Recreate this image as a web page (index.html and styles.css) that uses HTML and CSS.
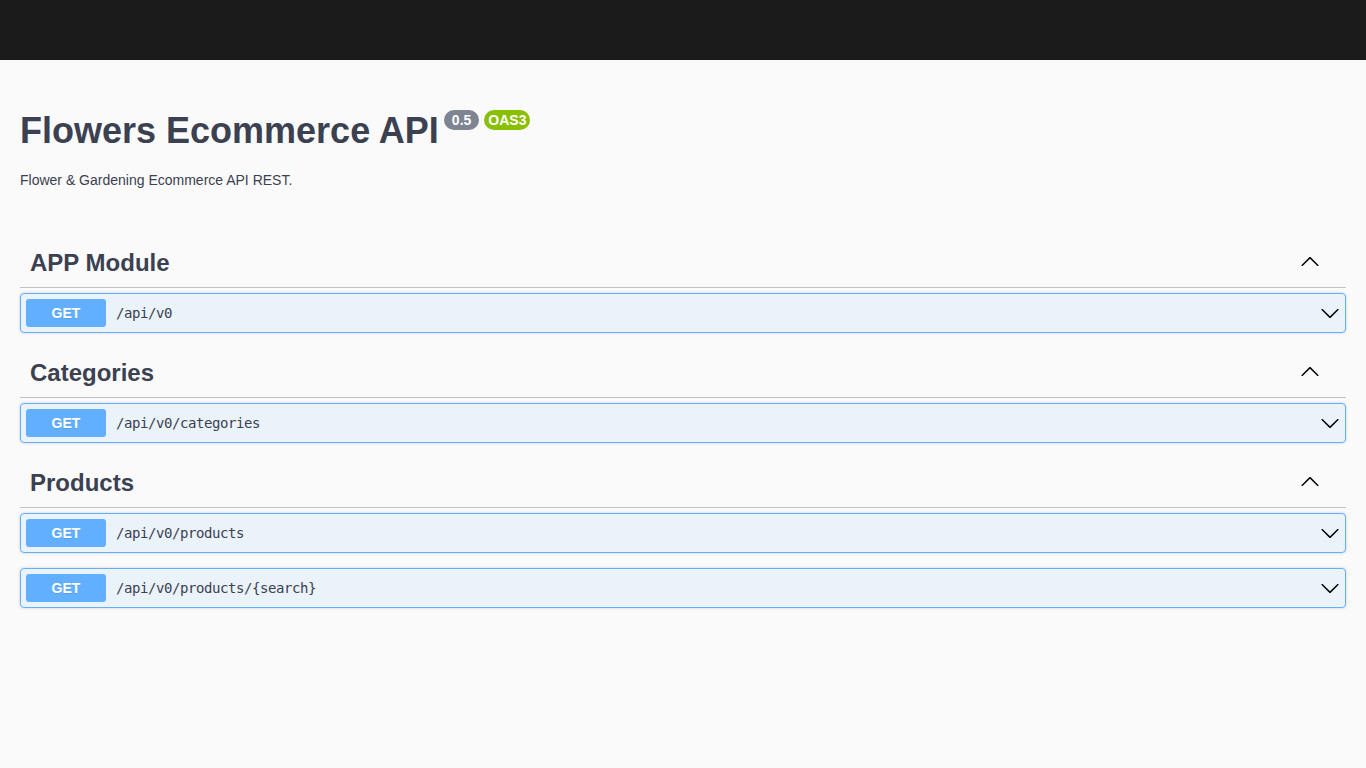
FILE: index.html
```html
<!DOCTYPE html>
<html>
<head>
<meta charset="utf-8">
<title>Flowers Ecommerce API</title>
<link rel="stylesheet" href="styles.css">
</head>
<body>
<div class="topbar"></div>
<div class="wrapper">
  <div class="info">
    <div class="title-row">
      <h2 class="title">Flowers Ecommerce API</h2>
      <span class="badge badge-version">0.5</span>
      <span class="badge badge-oas">OAS3</span>
    </div>
    <p class="description">Flower &amp; Gardening Ecommerce API REST.</p>
  </div>

  <section class="tag-section">
    <h3 class="tag">
      <span class="tag-name">APP Module</span>
      <svg class="arrow-up" width="20" height="20" viewBox="0 0 20 20"><path d="M17.418 14.908c.272.268.709.268.979 0s.271-.701 0-.969l-7.908-7.83c-.27-.268-.707-.268-.979 0l-7.908 7.83c-.27.268-.27.701 0 .969.271.268.709.268.979 0L10 7.767l7.418 7.141z"/></svg>
    </h3>
    <div class="opblock">
      <span class="method">GET</span>
      <span class="path">/api/v0</span>
      <svg class="arrow-down" width="20" height="20" viewBox="0 0 20 20"><path d="M17.418 6.109c.272-.268.709-.268.979 0s.271.701 0 .969l-7.908 7.83c-.27.268-.707.268-.979 0l-7.908-7.83c-.27-.268-.27-.701 0-.969.271-.268.709-.268.979 0L10 13.25l7.418-7.141z"/></svg>
    </div>
  </section>

  <section class="tag-section">
    <h3 class="tag">
      <span class="tag-name">Categories</span>
      <svg class="arrow-up" width="20" height="20" viewBox="0 0 20 20"><path d="M17.418 14.908c.272.268.709.268.979 0s.271-.701 0-.969l-7.908-7.83c-.27-.268-.707-.268-.979 0l-7.908 7.83c-.27.268-.27.701 0 .969.271.268.709.268.979 0L10 7.767l7.418 7.141z"/></svg>
    </h3>
    <div class="opblock">
      <span class="method">GET</span>
      <span class="path">/api/v0/categories</span>
      <svg class="arrow-down" width="20" height="20" viewBox="0 0 20 20"><path d="M17.418 6.109c.272-.268.709-.268.979 0s.271.701 0 .969l-7.908 7.83c-.27.268-.707.268-.979 0l-7.908-7.83c-.27-.268-.27-.701 0-.969.271-.268.709-.268.979 0L10 13.25l7.418-7.141z"/></svg>
    </div>
  </section>

  <section class="tag-section">
    <h3 class="tag">
      <span class="tag-name">Products</span>
      <svg class="arrow-up" width="20" height="20" viewBox="0 0 20 20"><path d="M17.418 14.908c.272.268.709.268.979 0s.271-.701 0-.969l-7.908-7.83c-.27-.268-.707-.268-.979 0l-7.908 7.83c-.27.268-.27.701 0 .969.271.268.709.268.979 0L10 7.767l7.418 7.141z"/></svg>
    </h3>
    <div class="opblock">
      <span class="method">GET</span>
      <span class="path">/api/v0/products</span>
      <svg class="arrow-down" width="20" height="20" viewBox="0 0 20 20"><path d="M17.418 6.109c.272-.268.709-.268.979 0s.271.701 0 .969l-7.908 7.83c-.27.268-.707.268-.979 0l-7.908-7.83c-.27-.268-.27-.701 0-.969.271-.268.709-.268.979 0L10 13.25l7.418-7.141z"/></svg>
    </div>
    <div class="opblock">
      <span class="method">GET</span>
      <span class="path">/api/v0/products/{search}</span>
      <svg class="arrow-down" width="20" height="20" viewBox="0 0 20 20"><path d="M17.418 6.109c.272-.268.709-.268.979 0s.271.701 0 .969l-7.908 7.83c-.27.268-.707.268-.979 0l-7.908-7.83c-.27-.268-.27-.701 0-.969.271-.268.709-.268.979 0L10 13.25l7.418-7.141z"/></svg>
    </div>
  </section>
</div>
</body>
</html>
```

FILE: styles.css
```css
html, body {
  margin: 0;
  padding: 0;
  background: #fafafa;
  font-family: "Liberation Sans", Arial, sans-serif;
  color: #3b4151;
}

.topbar {
  height: 60px;
  background: #1b1b1b;
}

.wrapper {
  padding: 0 20px;
}

.info {
  padding-top: 50px;
  margin-bottom: 47px;
}

.title-row {
  display: flex;
  align-items: flex-start;
  gap: 5px;
  margin-bottom: 19px;
}

.title {
  margin: 0;
  font-size: 36px;
  font-weight: 700;
  line-height: 41px;
  color: #3b4151;
}

.badge {
  display: inline-block;
  height: 20px;
  line-height: 20px;
  border-radius: 57px;
  color: #fff;
  font-size: 14px;
  font-weight: 700;
}

.badge-version {
  background: #7d8492;
  padding: 0 8px;
}

.badge-oas {
  background: #89bf04;
  padding: 0 4px;
}

.description {
  margin: 0;
  font-size: 14px;
  line-height: 21px;
}

.tag-section {
  display: flex;
  flex-direction: column;
}

.tag {
  display: flex;
  align-items: center;
  margin: 0 0 5px;
  padding: 10px 26px 10px 10px;
  height: 29px;
  box-sizing: content-box;
  border-bottom: 1px solid rgba(59, 65, 81, 0.3);
  font-size: 24px;
  font-weight: 700;
  color: #3b4151;
}

.tag-name {
  flex: 1;
}

.arrow-up {
  fill: #000;
  margin-bottom: 3px;
}

.opblock {
  display: flex;
  align-items: center;
  margin-bottom: 15px;
  padding: 5px;
  border: 1px solid #61affe;
  border-radius: 4px;
  background: rgba(97, 175, 254, 0.1);
  box-shadow: 0 0 3px rgba(0, 0, 0, 0.19);
}

.method {
  width: 80px;
  height: 28px;
  line-height: 28px;
  text-align: center;
  background: #61affe;
  border-radius: 3px;
  color: #fff;
  font-size: 14px;
  font-weight: 700;
  text-shadow: 0 1px 0 rgba(0, 0, 0, 0.1);
}

.path {
  flex: 1;
  padding: 0 10px;
  font-family: "DejaVu Sans Mono", monospace;
  font-size: 14px;
  letter-spacing: -0.43px;
  color: #3b4151;
}

.arrow-down {
  fill: #000;
}
```
